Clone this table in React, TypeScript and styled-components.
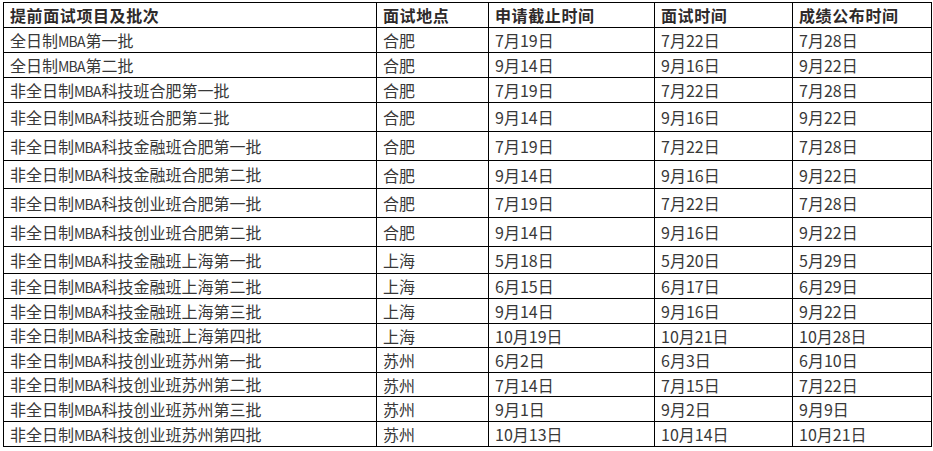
import React from "react";
import styled, { createGlobalStyle } from "styled-components";

const Global = createGlobalStyle`
  html, body { margin: 0; padding: 0; background: #fff; }
  body { font-family: "Noto Sans CJK SC", "Liberation Sans", sans-serif; }
`;

const Page = styled.div`
  padding: 2px 0 0 3px;
`;

const Table = styled.table`
  border-collapse: collapse;
  table-layout: fixed;
  width: 929px;
`;

const Row = styled.tr<{ $h: number }>`
  height: ${(p) => p.$h}px;
`;

const HeadCell = styled.th`
  border: 1px solid #000;
  padding: 0 0 0 6px;
  text-align: left;
  vertical-align: middle;
  font-size: 16px;
  font-weight: 700;
  color: #2e2a2a;
  line-height: 18px;
  letter-spacing: 0.6px;
  white-space: nowrap;
`;

const Cell = styled.td`
  border: 1px solid #000;
  padding: 0 0 0 6px;
  vertical-align: middle;
  font-size: 16px;
  font-weight: 400;
  color: #383838;
  line-height: 18px;
  white-space: nowrap;
  overflow: hidden;
`;

const Latin = styled.span`
  font-size: 14px;
  letter-spacing: -0.8px;
  margin-right: 0.8px;
`;

const cols = [373, 112, 166, 138, 139];
const headers = ["提前面试项目及批次", "面试地点", "申请截止时间", "面试时间", "成绩公布时间"];

const rows: [string, string, string, string, string, number][] = [
  ["全日制MBA第一批", "合肥", "7月19日", "7月22日", "7月28日", 25],
  ["全日制MBA第二批", "合肥", "9月14日", "9月16日", "9月22日", 25],
  ["非全日制MBA科技班合肥第一批", "合肥", "7月19日", "7月22日", "7月28日", 25],
  ["非全日制MBA科技班合肥第二批", "合肥", "9月14日", "9月16日", "9月22日", 29],
  ["非全日制MBA科技金融班合肥第一批", "合肥", "7月19日", "7月22日", "7月28日", 29],
  ["非全日制MBA科技金融班合肥第二批", "合肥", "9月14日", "9月16日", "9月22日", 28],
  ["非全日制MBA科技创业班合肥第一批", "合肥", "7月19日", "7月22日", "7月28日", 29],
  ["非全日制MBA科技创业班合肥第二批", "合肥", "9月14日", "9月16日", "9月22日", 29],
  ["非全日制MBA科技金融班上海第一批", "上海", "5月18日", "5月20日", "5月29日", 27],
  ["非全日制MBA科技金融班上海第二批", "上海", "6月15日", "6月17日", "6月29日", 25],
  ["非全日制MBA科技金融班上海第三批", "上海", "9月14日", "9月16日", "9月22日", 25],
  ["非全日制MBA科技金融班上海第四批", "上海", "10月19日", "10月21日", "10月28日", 24],
  ["非全日制MBA科技创业班苏州第一批", "苏州", "6月2日", "6月3日", "6月10日", 25],
  ["非全日制MBA科技创业班苏州第二批", "苏州", "7月14日", "7月15日", "7月22日", 24],
  ["非全日制MBA科技创业班苏州第三批", "苏州", "9月1日", "9月2日", "9月9日", 25],
  ["非全日制MBA科技创业班苏州第四批", "苏州", "10月13日", "10月14日", "10月21日", 25],
];

function Name({ text }: { text: string }) {
  const [a, b] = text.split("MBA");
  return (
    <>
      {a}
      <Latin>MBA</Latin>
      {b}
    </>
  );
}

export default function App() {
  return (
    <Page>
      <Global />
      <Table>
        <colgroup>
          {cols.map((w, i) => (
            <col key={i} style={{ width: w }} />
          ))}
        </colgroup>
        <thead>
          <Row $h={25}>
            {headers.map((h) => (
              <HeadCell key={h}>{h}</HeadCell>
            ))}
          </Row>
        </thead>
        <tbody>
          {rows.map((r, i) => (
            <Row key={i} $h={r[5]}>
              <Cell>
                <Name text={r[0]} />
              </Cell>
              {r.slice(1, 5).map((c, j) => (
                <Cell key={j}>{c}</Cell>
              ))}
            </Row>
          ))}
        </tbody>
      </Table>
    </Page>
  );
}
